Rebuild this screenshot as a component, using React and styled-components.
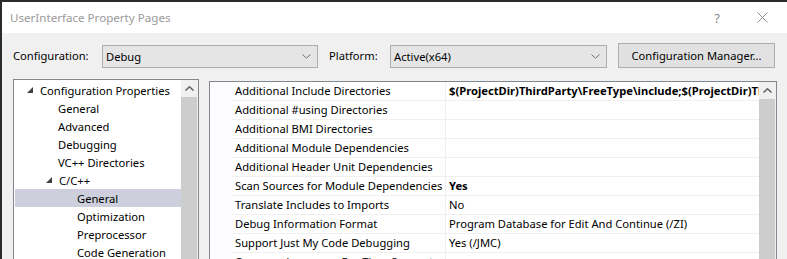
import React from "react";
import styled, { createGlobalStyle } from "styled-components";

const Global = createGlobalStyle`
  html, body { margin: 0; padding: 0; background: #2b2b2b; overflow: hidden; }
  body { font-family: "Noto Sans", "Segoe UI", sans-serif; font-size: 11.2px; color: #000; }
  #root { width: 787px; height: 259px; }
`;

const Shell = styled.div`
  width: 787px;
  height: 259px;
  padding: 2px 0 0 2px;
  box-sizing: border-box;
`;

const Window = styled.div`
  width: 785px;
  height: 257px;
  background: #f0f0f0;
  display: flex;
  flex-direction: column;
  overflow: hidden;
`;

const TitleBar = styled.div`
  height: 31px;
  flex: none;
  background: #fff;
  display: flex;
  align-items: center;
  padding-left: 8px;
  padding-right: 2px;
  color: #9a9a9a;
  font-size: 11.6px;
`;

const TitleText = styled.div`
  flex: 1;
  padding-bottom: 1px;
`;

const TitleButton = styled.div`
  width: ${(p) => p.$w}px;
  margin-right: ${(p) => p.$mr || 0}px;
  display: flex;
  justify-content: center;
  align-items: center;
  color: #8a8a8a;
  font-size: 13px;
`;

const Toolbar = styled.div`
  flex: none;
  display: flex;
  align-items: center;
  height: 25px;
  margin-top: 10px;
  padding-left: 11px;
`;

const Label = styled.span`
  width: ${(p) => p.$w}px;
  flex: none;
`;

const Combo = styled.div`
  width: ${(p) => p.$w}px;
  height: 23px;
  margin-top: 2px;
  box-sizing: border-box;
  border: 1px solid #adadad;
  background: #e5e5e5;
  display: flex;
  align-items: center;
  padding: 0 6px 0 3px;
  margin-right: ${(p) => p.$mr}px;
  flex: none;
`;

const ComboText = styled.span`
  flex: 1;
`;

const Button = styled.div`
  width: 157px;
  height: 25px;
  box-sizing: border-box;
  border: 1px solid #adadad;
  background: #e1e1e1;
  display: flex;
  align-items: center;
  justify-content: center;
  flex: none;
  padding-bottom: 1px;
`;

const Panels = styled.div`
  flex: 1;
  display: flex;
  align-items: flex-start;
  margin-top: 11px;
  padding-left: 11px;
  min-height: 0;
`;

const Tree = styled.div`
  width: 186px;
  height: 200px;
  flex: none;
  box-sizing: border-box;
  border: 1px solid #828790;
  background: #fff;
  display: flex;
  margin-right: 10px;
`;

const TreeList = styled.div`
  flex: 1;
  padding-top: 1px;
  display: flex;
  flex-direction: column;
`;

const TreeRow = styled.div`
  height: 18px;
  display: flex;
  align-items: center;
  margin-left: 1px;
  padding-left: ${(p) => p.$indent}px;
  background: ${(p) => (p.$selected ? "#cdd0dc" : "transparent")};
  white-space: nowrap;
`;

const Expander = styled.span`
  width: ${(p) => p.$w}px;
  flex: none;
  display: flex;
  align-items: center;
`;

const ScrollBar = styled.div`
  width: 17px;
  flex: none;
  background: #f0f0f0;
  display: flex;
  flex-direction: column;
`;

const ScrollArrow = styled.div`
  height: 17px;
  display: flex;
  align-items: center;
  justify-content: center;
`;

const ScrollThumb = styled.div`
  flex: 1;
  margin: 0 1px 0 0;
  background: #cdcdcd;
`;

const Grid = styled.div`
  margin-top: 2px;
  width: 568px;
  height: 200px;
  flex: none;
  box-sizing: border-box;
  border: 1px solid #828790;
  background: #fff;
  display: flex;
`;

const Gutter = styled.div`
  width: 22px;
  flex: none;
  background: #fcfcfe;
`;

const GridBody = styled.div`
  flex: 1;
  display: flex;
  flex-direction: column;
  min-width: 0;
`;

const PropRow = styled.div`
  height: 19px;
  flex: none;
  display: grid;
  grid-template-columns: 214px 1fr;
  border-bottom: 1px solid #f0f0f0;
  box-sizing: border-box;
`;

const Cell = styled.div`
  display: flex;
  align-items: center;
  padding-left: 3px;
  white-space: nowrap;
  overflow: hidden;
  font-weight: ${(p) => (p.$bold ? 700 : 400)};
  border-right: ${(p) => (p.$name ? "1px solid #f0f0f0" : "none")};
  padding-bottom: 1px;
`;

const Chevron = ({ up }) => (
  <svg width="9" height="5" viewBox="0 0 9 5">
    <polyline
      points={up ? "0.5,4.5 4.5,0.8 8.5,4.5" : "0.5,0.5 4.5,4.2 8.5,0.5"}
      fill="none"
      stroke={up ? "#606060" : "#707070"}
      strokeWidth={up ? 1.5 : 1}
    />
  </svg>
);

const Triangle = () => (
  <svg width="6" height="6" viewBox="0 0 6 6">
    <polygon points="6,0 6,6 0,6" fill="#404040" />
  </svg>
);

const treeItems = [
  { text: "Configuration Properties", indent: 12, exp: true },
  { text: "General", indent: 43 },
  { text: "Advanced", indent: 43 },
  { text: "Debugging", indent: 43 },
  { text: "VC++ Directories", indent: 43 },
  { text: "C/C++", indent: 31, exp: true },
  { text: "General", indent: 62, selected: true },
  { text: "Optimization", indent: 62 },
  { text: "Preprocessor", indent: 62 },
  { text: "Code Generation", indent: 62 },
];

const props = [
  ["Additional Include Directories", "$(ProjectDir)ThirdParty\\FreeType\\include;$(ProjectDir)ThirdParty\\glfw\\include;%(AdditionalIncludeDirectories)", true],
  ["Additional #using Directories", ""],
  ["Additional BMI Directories", ""],
  ["Additional Module Dependencies", ""],
  ["Additional Header Unit Dependencies", ""],
  ["Scan Sources for Module Dependencies", "Yes", true],
  ["Translate Includes to Imports", "No"],
  ["Debug Information Format", "Program Database for Edit And Continue (/ZI)"],
  ["Support Just My Code Debugging", "Yes (/JMC)"],
  ["Common Language RunTime Support", ""],
];

export default function App() {
  return (
    <>
      <Global />
      <Shell>
        <Window>
          <TitleBar>
            <TitleText>UserInterface Property Pages</TitleText>
            <TitleButton $w={30} $mr={7}>?</TitleButton>
            <TitleButton $w={46}>
              <svg width="11" height="11" viewBox="0 0 11 11">
                <path d="M0.5 0.5 L10.5 10.5 M10.5 0.5 L0.5 10.5" stroke="#8a8a8a" strokeWidth="1" />
              </svg>
            </TitleButton>
          </TitleBar>
          <Toolbar>
            <Label $w={89}>Configuration:</Label>
            <Combo $w={216} $mr={11}>
              <ComboText>Debug</ComboText>
              <Chevron />
            </Combo>
            <Label $w={61}>Platform:</Label>
            <Combo $w={217} $mr={11}>
              <ComboText>Active(x64)</ComboText>
              <Chevron />
            </Combo>
            <Button>Configuration Manager...</Button>
          </Toolbar>
          <Panels>
            <Tree>
              <TreeList>
                {treeItems.map((t, i) => (
                  <TreeRow key={i} $indent={t.indent} $selected={t.selected}>
                    {t.exp && (
                      <Expander $w={13}>
                        <Triangle />
                      </Expander>
                    )}
                    {t.text}
                  </TreeRow>
                ))}
              </TreeList>
              <ScrollBar>
                <ScrollArrow>
                  <Chevron up />
                </ScrollArrow>
                <ScrollThumb />
              </ScrollBar>
            </Tree>
            <Grid>
              <Gutter />
              <GridBody>
                {props.map(([n, v, b], i) => (
                  <PropRow key={i}>
                    <Cell $name>{n}</Cell>
                    <Cell $bold={b}>{v}</Cell>
                  </PropRow>
                ))}
              </GridBody>
              <ScrollBar>
                <ScrollArrow>
                  <Chevron up />
                </ScrollArrow>
                <ScrollThumb />
              </ScrollBar>
            </Grid>
          </Panels>
        </Window>
      </Shell>
    </>
  );
}
